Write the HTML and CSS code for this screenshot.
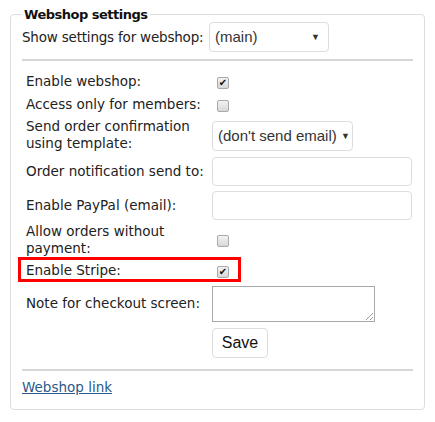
FILE: index.html
```html
<!DOCTYPE html>
<html>
<head>
<meta charset="utf-8">
<link rel="stylesheet" href="styles.css">
</head>
<body>
<fieldset class="box">
  <legend class="legend">Webshop settings</legend>
  <div class="top-row">
    <span class="top-label">Show settings for webshop:</span>
    <div class="select sel-main"><span>(main)</span><span class="arrow">▼</span></div>
  </div>
  <hr class="rule">
  <table class="form">
    <tr class="r-check"><td class="lbl">Enable webshop:</td><td><span class="cb checked">✔</span></td></tr>
    <tr class="r-check"><td class="lbl">Access only for members:</td><td><span class="cb"></span></td></tr>
    <tr class="r-send"><td class="lbl">Send order confirmation using template:</td><td><div class="select sel-tpl"><span>(don't send email)</span><span class="arrow">▼</span></div></td></tr>
    <tr class="r-input"><td class="lbl">Order notification send to:</td><td><div class="input"></div></td></tr>
    <tr class="r-input"><td class="lbl">Enable PayPal (email):</td><td><div class="input"></div></td></tr>
    <tr class="r-allow"><td class="lbl">Allow orders without payment:</td><td><span class="cb"></span></td></tr>
    <tr class="r-stripe"><td class="lbl">Enable Stripe:</td><td><span class="cb checked">✔</span></td></tr>
    <tr class="r-note"><td class="lbl">Note for checkout screen:</td><td><div class="textarea"><span class="grip"></span></div></td></tr>
    <tr class="r-save"><td></td><td><div class="btn">Save</div></td></tr>
  </table>
  <div class="highlight"></div>
  <hr class="rule rule2">
  <a class="link" href="#">Webshop link</a>
</fieldset>
</body>
</html>
```
FILE: styles.css
```css
html, body { margin: 0; padding: 0; background: #fff; }
body {
  padding: 0 8px;
  font-family: "DejaVu Sans", Verdana, sans-serif;
  font-size: 13.5px;
  color: #222;
}
.box {
  position: relative;
  margin: 7px 2px 0 2px;
  border: 1px solid #ddd;
  border-radius: 4px;
  padding: 0 11px 0 11px;
  height: 403px;
  box-sizing: border-box;
}
.legend {
  font-weight: bold;
  padding: 0 2px;
  margin-left: 0;
  font-size: 13px;
  letter-spacing: -0.5px;
  line-height: 15px;
  color: #111;
}
.top-row {
  display: flex;
  align-items: center;
  height: 31px;
  margin-top: -1px;
}
.top-label {
  flex: 0 0 187px;
  white-space: nowrap;
  letter-spacing: -0.2px;
}
.select {
  display: flex;
  align-items: center;
  justify-content: space-between;
  box-sizing: border-box;
  border: 1px solid #ddd;
  border-radius: 4px;
  font-family: "Liberation Sans", Arial, sans-serif;
  font-size: 15px;
  color: #333;
  padding: 0 4px 0 5px;
}
.arrow { font-size: 9px; color: #333; }
.sel-main { width: 120px; height: 30px; padding-right: 8px; }
.sel-tpl { width: 141px; height: 30px; padding-right: 2px; margin-top: 1px; }
.rule {
  border: 0;
  border-top: 2px solid #d6d6d6;
  margin: 7px 0 0 0;
}
.form {
  border-collapse: collapse;
  margin-top: 9px;
}
.form td { padding: 0; vertical-align: middle; }
.lbl { width: 186px; padding-left: 4px !important; line-height: 17px; }
.r-check { height: 23px; }
.r-send { height: 38px; }
.r-input { height: 34px; }
.r-allow { height: 36px; }
.r-stripe { height: 25px; }
.r-note { height: 41px; }
.r-save { height: 37px; }
.cb {
  display: inline-flex;
  align-items: center;
  justify-content: center;
  box-sizing: border-box;
  width: 12px;
  height: 12px;
  margin-left: 5px;
  border: 1px solid #a9a9a9;
  border-radius: 2px;
  background: linear-gradient(#f2f2f2, #d8d8d8);
  font-size: 10px;
  font-weight: bold;
  line-height: 1;
  color: #111;
  vertical-align: middle;
}
.input {
  width: 200px;
  height: 29px;
  box-sizing: border-box;
  border: 1px solid #ddd;
  border-radius: 4px;
}
.textarea {
  position: relative;
  width: 163px;
  height: 36px;
  box-sizing: border-box;
  border: 1px solid #a9a9a9;
  margin-top: 1px;
}
.grip {
  position: absolute;
  right: 1px;
  bottom: 1px;
  width: 7px;
  height: 7px;
  background: linear-gradient(135deg, transparent 45%, #999 45%, #999 55%, transparent 55%, transparent 72%, #999 72%, #999 82%, transparent 82%);
}
.btn {
  display: flex;
  align-items: center;
  justify-content: center;
  width: 56px;
  height: 30px;
  box-sizing: border-box;
  border: 1px solid #ddd;
  border-radius: 4px;
  font-family: "Liberation Sans", Arial, sans-serif;
  font-size: 16px;
  color: #111;
}
.highlight {
  position: absolute;
  left: 7px;
  top: 235px;
  width: 223px;
  height: 25px;
  box-sizing: border-box;
  border: 3px solid #f00;
}
.rule2 { margin-top: 8px; }
.link {
  display: inline-block;
  margin-top: 8px;
  color: #2a5a8a;
  text-decoration: underline;
}
```
